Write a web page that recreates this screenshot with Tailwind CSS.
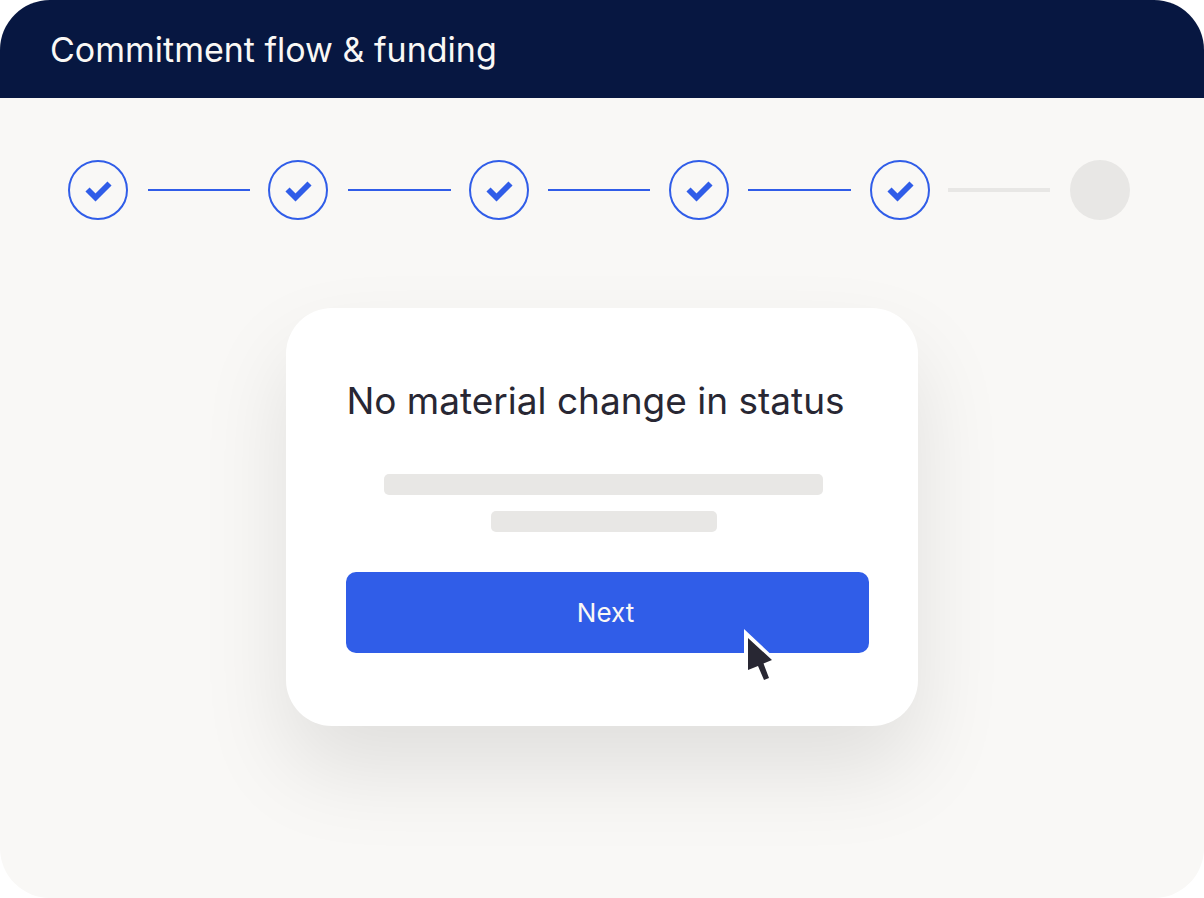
<!DOCTYPE html>
<html lang="en">
<head>
<meta charset="utf-8">
<meta name="viewport" content="width=device-width, initial-scale=1">
<title>Commitment flow &amp; funding</title>
<script src="https://cdn.jsdelivr.net/npm/@tailwindcss/browser@4"></script>
</head>
<body class="bg-white font-['Inter',sans-serif]">
<svg class="hidden" aria-hidden="true">
  <symbol id="check" viewBox="0 0 60 60">
    <circle cx="30" cy="30" r="29" fill="none" stroke="#305de8" stroke-width="2"/>
    <path d="M19.500 29.500L27.500 37.500L41.500 23.500" fill="none" stroke="#305de8" stroke-width="5.800"/>
  </symbol>
</svg>
<div class="flex min-h-screen flex-col overflow-hidden rounded-[50px] bg-[#f9f8f6]">
  <header class="bg-[#071741] px-[50px] pt-[26px] pb-6">
    <h1 class="text-[34px] leading-[48px] font-normal text-[#faf8f5]">Commitment flow &amp; funding</h1>
  </header>
  <main class="flex flex-1 flex-col items-center">
    <ol class="flex w-full items-center pt-[62px] pr-[74px] pl-[68px]" aria-label="Progress">
      <li class="flex flex-1 items-center"><svg class="size-[60px] shrink-0" role="img" aria-label="Step 1 complete"><use href="#check"/></svg><span class="mr-[18px] ml-5 h-0.5 flex-1 bg-[#305de8]"></span></li>
      <li class="flex flex-1 items-center"><svg class="size-[60px] shrink-0" role="img" aria-label="Step 2 complete"><use href="#check"/></svg><span class="mr-[18px] ml-5 h-0.5 flex-1 bg-[#305de8]"></span></li>
      <li class="flex flex-1 items-center"><svg class="size-[60px] shrink-0" role="img" aria-label="Step 3 complete"><use href="#check"/></svg><span class="mx-[19px] h-0.5 flex-1 bg-[#305de8]"></span></li>
      <li class="flex flex-1 items-center"><svg class="size-[60px] shrink-0" role="img" aria-label="Step 4 complete"><use href="#check"/></svg><span class="mx-[19px] h-0.5 flex-1 bg-[#305de8]"></span></li>
      <li class="flex flex-1 items-center"><svg class="size-[60px] shrink-0" role="img" aria-label="Step 5 complete"><use href="#check"/></svg><span class="mr-5 ml-[18px] h-1 flex-1 bg-[#e8e7e5]"></span></li>
      <li class="size-[60px] shrink-0 rounded-full bg-[#e8e7e5]" aria-label="Step 6"></li>
    </ol>
    <section class="mt-22 flex w-full max-w-[632px] flex-col rounded-[46px] bg-white pt-[68px] pr-[49px] pb-[73px] pl-[60px] shadow-[0_44px_88px_rgba(0,0,0,0.10)]">
      <h2 class="pr-6 text-center text-[37px] leading-[50px] text-[#282733]">No material change in status</h2>
      <div class="mt-12 flex flex-col items-center gap-4 pr-2">
        <span class="h-[21px] w-full max-w-[439px] rounded-[5px] bg-[#e8e7e5]"></span>
        <span class="h-[21px] w-full max-w-[226px] rounded-[5px] bg-[#e8e7e5]"></span>
      </div>
      <div class="relative mt-10">
        <button type="button" class="h-[81px] w-full rounded-[10px] bg-[#305de8] pr-1 text-[26px] leading-8 text-[#faf8f5]">Next</button>
        <svg class="absolute top-[54px] right-[88px] h-[60px] w-[40px]" viewBox="741 626 40 60" aria-hidden="true">
          <path d="M744 629L777 660L770 665L775 680L766 685L757 671L744 675Z" fill="#fff"/>
          <path d="M748 638L772 660L763.500 663.500L769 678L764 680L758 666L748 670Z" fill="#282733"/>
        </svg>
      </div>
    </section>
  </main>
</div>
</body>
</html>
